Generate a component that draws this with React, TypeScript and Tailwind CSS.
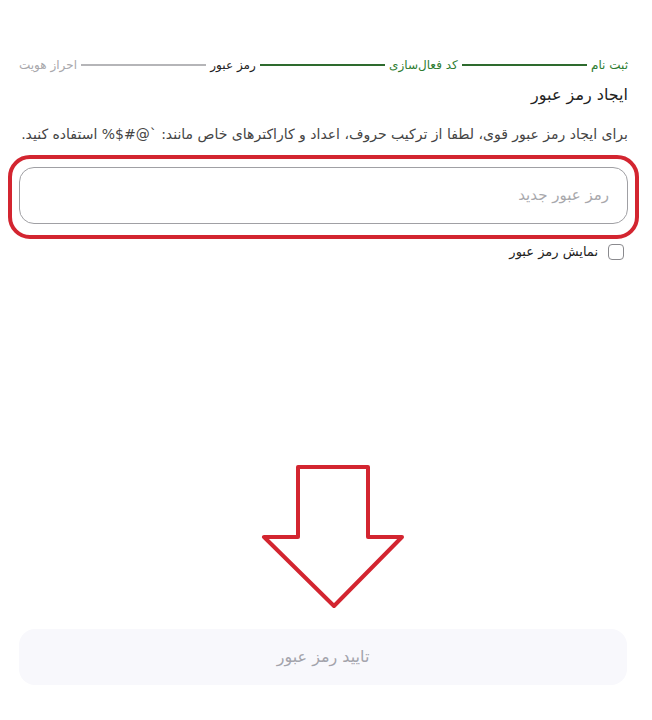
import React from "react";

export default function App() {
  return (
    <div
      dir="rtl"
      className="relative w-[652px] h-[720px] bg-white overflow-hidden"
      style={{ fontFamily: '"DejaVu Sans", "Noto Sans", sans-serif' }}
    >
      <div className="pr-[24px] pl-[19px] pt-[57px] flex flex-col">
        {/* stepper */}
        <div className="flex items-center h-[16px] text-[12px] leading-none">
          <span className="text-[#2e7d32] whitespace-nowrap">ثبت نام</span>
          <div className="flex-1 h-[2px] bg-[#2e6b2e] mx-[4px]" />
          <span className="text-[#2e7d32] whitespace-nowrap">کد فعال‌سازی</span>
          <div className="flex-1 h-[2px] bg-[#2e6b2e] mx-[4px]" />
          <span className="text-[#222] whitespace-nowrap">رمز عبور</span>
          <div className="flex-1 h-[2px] bg-[#b5b5b8] mx-[4px]" />
          <span className="text-[#a8a8ac] whitespace-nowrap">احراز هویت</span>
        </div>

        <div className="mt-[12px] text-[16px] leading-[20px] text-[#222] font-normal">
          ایجاد رمز عبور
        </div>

        <div className="mt-[20px] text-[14px] leading-[18px] text-[#444] whitespace-nowrap">
          برای ایجاد رمز عبور قوی، لطفا از ترکیب حروف، اعداد و کاراکترهای خاص مانند: `@#$% استفاده کنید.
        </div>

        <div className="mt-[24px] h-[57px] rounded-[15px] border border-[#a0a0a4] flex items-center px-[18px]">
          <span className="text-[15px] text-[#a8a8ac]">رمز عبور جدید</span>
        </div>

        <div className="mt-[18px] flex items-center gap-[10px] pr-[4px]">
          <div className="w-[16px] h-[16px] rounded-[4px] border border-[#8a8a8e]" />
          <span className="text-[13px] text-[#222]">نمایش رمز عبور</span>
        </div>
      </div>

      {/* confirm button */}
      <div className="absolute left-[19px] right-[25px] top-[629px] h-[56px] rounded-[16px] bg-[#f8f8fc] flex items-center justify-center">
        <span className="text-[16px] text-[#a3a3ab]">تایید رمز عبور</span>
      </div>

      {/* annotation overlays */}
      <div className="absolute left-[8px] top-[155px] w-[631px] h-[84px] rounded-[22px] border-[4px] border-[#d32530] pointer-events-none" />
      <svg
        className="absolute left-0 top-0 pointer-events-none"
        width="652"
        height="720"
        viewBox="0 0 652 720"
      >
        <path
          d="M298 467 L368 467 L368 537 L402 537 L334 606 L264 537 L298 537 Z"
          fill="none"
          stroke="#d32530"
          strokeWidth="4"
          strokeLinejoin="round"
        />
      </svg>
    </div>
  );
}
